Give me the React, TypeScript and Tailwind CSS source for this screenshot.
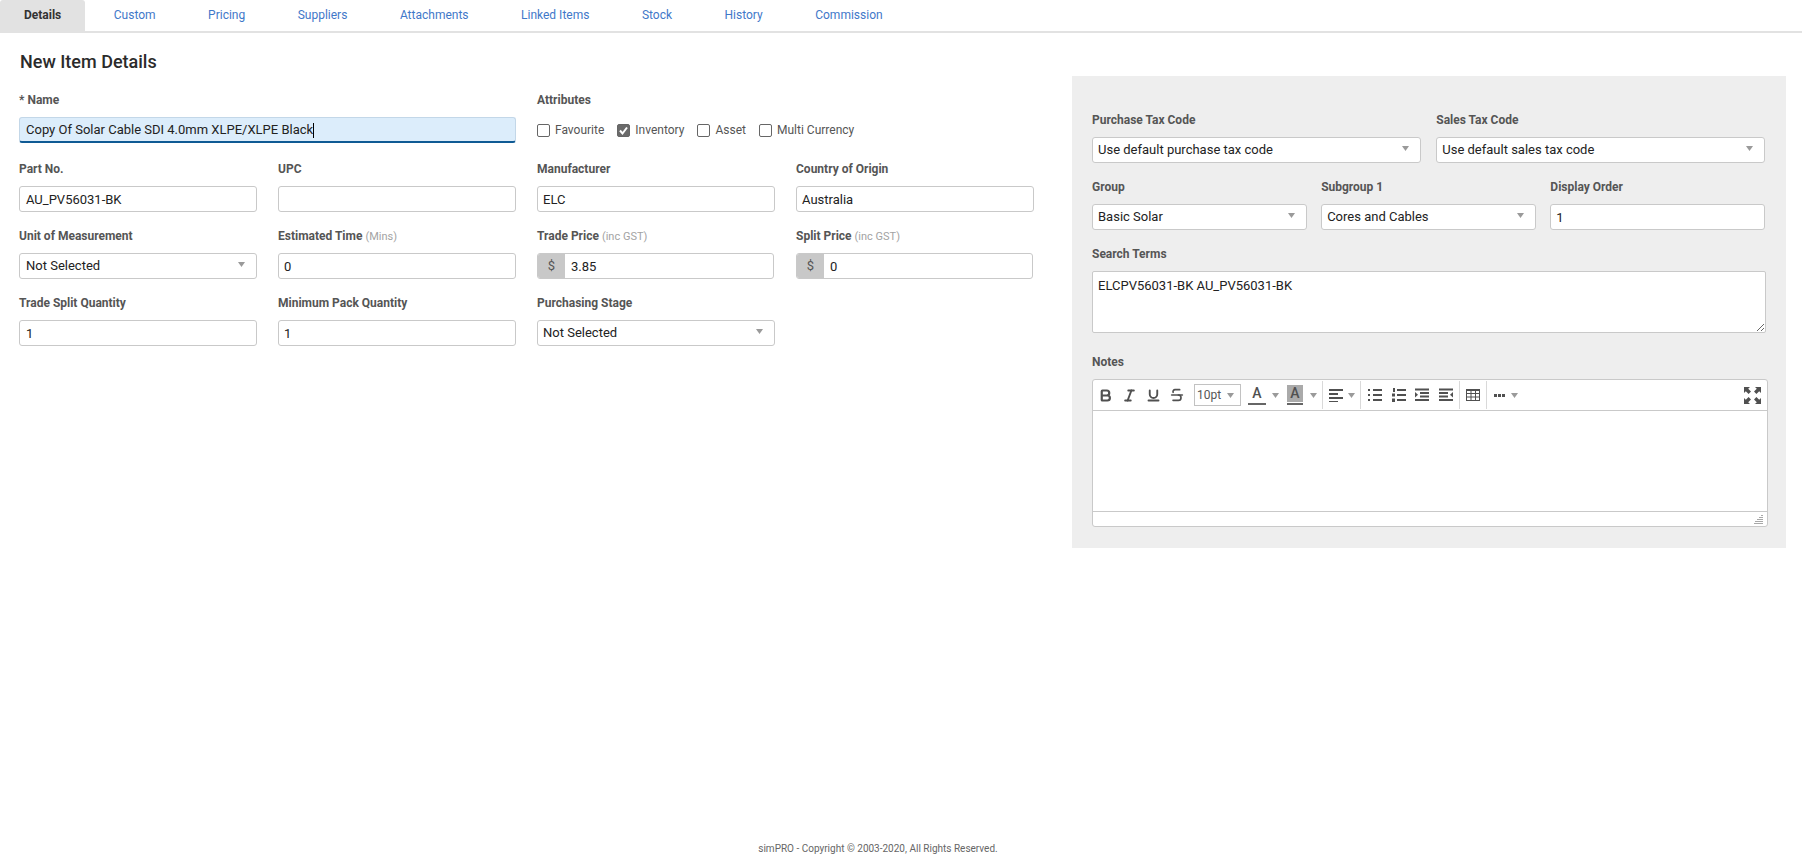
import { ReactNode } from "react";
import { Bold, Italic, Underline, Strikethrough } from "lucide-react";

const tabs = ["Custom", "Pricing", "Suppliers", "Attachments", "Linked Items", "Stock", "History", "Commission"];

const Label = ({ children, hint }: { children: ReactNode; hint?: string }) => (
  <div className="h-[16px] mb-[9px] text-[12px] leading-[16px] font-bold text-[#555] whitespace-nowrap">
    {children}
    {hint && <span className="ml-[3px] font-normal text-[11px] text-[#a3a3a3]">{hint}</span>}
  </div>
);

const Box = ({ children, className = "bg-white border-[#c9c9c9] px-[5px]" }: { children?: ReactNode; className?: string }) => (
  <div className={`h-[26px] flex items-center border rounded-[3px] text-[13px] text-[#222] whitespace-nowrap ${className}`}>
    {children}
  </div>
);

// plain text inputs sit a pixel lower than the selects
const Input = ({ value, first }: { value?: string; first?: boolean }) => (
  <Box className={`bg-white border-[#c9c9c9] pt-[2px] pr-[5px] ${first ? "pl-[6px]" : "pl-[5px]"}`}>{value}</Box>
);

const Caret = ({ className = "" }: { className?: string }) => (
  <svg width="7" height="5" viewBox="0 0 7 5" className={`shrink-0 ${className}`}>
    <path d="M0 0h7L3.5 5z" fill="#9a9a9a" />
  </svg>
);

const Select = ({ value, first }: { value: string; first?: boolean }) => (
  <Box className={`bg-white border-[#c9c9c9] justify-between pr-[11px] ${first ? "pl-[6px]" : "pl-[5px]"}`}>
    <span>{value}</span>
    <Caret className="-mt-[3px]" />
  </Box>
);

const Money = ({ value }: { value: string }) => (
  <div className="h-[26px] w-[237px] flex bg-white border border-[#c9c9c9] rounded-[3px] overflow-hidden text-[13px] text-[#222]">
    <div className="w-[27px] bg-[#c8c8c8] text-[#555] flex items-center justify-center pb-[1px]">$</div>
    <div className="flex items-center pl-[6px] pt-[2px]">{value}</div>
  </div>
);

const Check = ({ label, checked }: { label: string; checked?: boolean }) => (
  <div className="flex items-center text-[12px] text-[#555]">
    <div className={`w-[13px] h-[13px] rounded-[2px] border border-[#666] flex items-center justify-center ${checked ? "bg-[#6a6a6a]" : "bg-white"}`}>
      {checked && (
        <svg width="11" height="11" viewBox="0 0 11 11">
          <path d="M2 5.5l2.5 3L9 2.5" fill="none" stroke="#fff" strokeWidth="2" />
        </svg>
      )}
    </div>
    <span className="ml-[5px]">{label}</span>
  </div>
);

const Sep = ({ className = "" }: { className?: string }) => <div className={`w-px h-[28px] bg-[#d9d9d9] ${className}`} />;

const ToolBtn = ({ children }: { children: ReactNode }) => (
  <div className="w-[24px] flex justify-center text-[#505050]">{children}</div>
);

const Lines = ({ kind }: { kind: "left" | "bullet" | "number" | "indent" | "outdent" }) => (
  <svg width="14" height="14" viewBox="0 0 14 14" fill="#505050">
    {kind === "left" && (
      <>
        <rect y="1" width="14" height="2" />
        <rect y="5" width="9" height="2" />
        <rect y="9" width="14" height="2" />
        <rect y="13" width="9" height="1" />
      </>
    )}
    {(kind === "bullet" || kind === "number") && (
      <>
        <rect x="5" y="1" width="9" height="2" />
        <rect x="5" y="6" width="9" height="2" />
        <rect x="5" y="11" width="9" height="2" />
        {kind === "bullet" ? (
          <>
            <rect x="0" y="1" width="2" height="2" />
            <rect x="0" y="6" width="2" height="2" />
            <rect x="0" y="11" width="2" height="2" />
          </>
        ) : (
          <>
            <rect x="1" y="0" width="2" height="4" />
            <rect x="0" y="5.5" width="3" height="3" />
            <rect x="0" y="10.5" width="3" height="3.5" />
          </>
        )}
      </>
    )}
    {kind === "indent" && (
      <>
        <rect y="0.5" width="14" height="2" />
        <rect x="5" y="4" width="9" height="2" />
        <rect x="5" y="7.5" width="9" height="2" />
        <rect y="11" width="14" height="2" />
        <path d="M0 4l3 2.7-3 2.7z" />
      </>
    )}
    {kind === "outdent" && (
      <>
        <rect y="0.5" width="14" height="2" />
        <rect y="4" width="9" height="2" />
        <rect y="7.5" width="9" height="2" />
        <rect y="11" width="14" height="2" />
        <path d="M14 4l-3 2.7 3 2.7z" />
      </>
    )}
  </svg>
);

const Toolbar = () => (
  <div className="h-[31px] flex items-center border-b border-[#c9c9c9]">
    <ToolBtn><Bold size={15} strokeWidth={3.5} /></ToolBtn>
    <ToolBtn><Italic size={15} strokeWidth={3} /></ToolBtn>
    <ToolBtn><Underline size={15} strokeWidth={3} /></ToolBtn>
    <ToolBtn><Strikethrough size={16} strokeWidth={2.5} /></ToolBtn>
    <div className="ml-[5px] w-[47px] h-[22px] border border-[#c2c2c2] flex items-center justify-between pl-[2px] pr-[6px] text-[12px] text-[#555]">
      <span>10pt</span>
      <Caret />
    </div>
    <div className="ml-[7px] w-[18px] h-[20px] flex flex-col items-center justify-between text-[#505050]">
      <span className="text-[14px] leading-[16px] font-medium">A</span>
      <div className="w-full h-[2px] bg-[#666]" />
    </div>
    <Caret className="ml-[6px]" />
    <div className="ml-[8px] w-[16px] h-[21px] flex flex-col items-center text-[#505050]">
      <span className="w-full h-[17px] bg-[#aaa] text-center text-[14px] leading-[17px] font-medium">A</span>
      <div className="w-full h-[2px] mt-[1px] bg-[#666]" />
    </div>
    <Caret className="ml-[7px]" />
    <Sep className="ml-[5px]" />
    <div className="ml-[6px]"><Lines kind="left" /></div>
    <Caret className="ml-[5px]" />
    <Sep className="ml-[5px]" />
    <div className="ml-[7px]"><Lines kind="bullet" /></div>
    <div className="ml-[10px]"><Lines kind="number" /></div>
    <div className="ml-[9px]"><Lines kind="indent" /></div>
    <div className="ml-[10px]"><Lines kind="outdent" /></div>
    <Sep className="ml-[6px]" />
    <svg width="14" height="12" viewBox="0 0 14 12" className="ml-[6px]" fill="none" stroke="#505050">
      <rect x="0.5" y="0.5" width="13" height="11" />
      <path d="M0 4.5h14M0 8h14M5 1v11M9.5 1v11" />
      <rect x="0" y="0" width="14" height="2" fill="#505050" stroke="none" />
    </svg>
    <Sep className="ml-[6px]" />
    <svg width="11" height="3" viewBox="0 0 11 3" className="ml-[7px]" fill="#505050">
      <rect width="3" height="3" />
      <rect x="4" width="3" height="3" />
      <rect x="8" width="3" height="3" />
    </svg>
    <Caret className="ml-[6px]" />
    <svg width="17" height="17" viewBox="0 0 17 17" className="ml-auto mr-[6px]" fill="#505050">
      <path d="M0 0h6L4.2 1.8 7 4.6 4.6 7 1.8 4.2 0 6z" />
      <path d="M17 0v6l-1.8-1.8L12.4 7 10 4.6l2.8-2.8L11 0z" />
      <path d="M0 17v-6l1.8 1.8L4.6 10 7 12.4l-2.8 2.8L6 17z" />
      <path d="M17 17h-6l1.8-1.8L10 12.4l2.4-2.4 2.8 2.8L17 11z" />
    </svg>
  </div>
);

export default function App() {
  return (
    <div className="h-[854px] overflow-hidden bg-white flex flex-col font-['Roboto',sans-serif]">
      {/* Tabs */}
      <div className="h-[33px] shrink-0 flex gap-[4.5px] border-b-2 border-[#e2e2e2] text-[12px]">
        <div className="px-[24px] pb-[1px] h-[31px] flex items-center font-bold bg-[#e2e2e2] text-[#333] rounded-t-[3px]">Details</div>
        {tabs.map((tab) => (
          <div key={tab} className="px-[24px] pb-[1px] h-[31px] flex items-center text-[#3f78c9]">
            {tab}
          </div>
        ))}
      </div>

      <div className="flex flex-1 min-h-0">
        {/* Left form */}
        <div className="w-[1072px] shrink-0 pl-[19px]">
          <h2 className="mt-[17px] mb-[18px] ml-[1px] text-[18px] leading-[24px] font-medium text-[#2b2b2b]">New Item Details</h2>

          <div className="flex mb-[18px]">
            <div className="w-[497px]">
              <Label>* Name</Label>
              <Box className="bg-[#dcedfb] border-[#c3d7e8] border-b-2 border-b-[#0f5a94] pt-[1px] px-[6px]">
                Copy Of Solar Cable SDI 4.0mm XLPE/XLPE Black
                <span className="w-px h-[15px] bg-black" />
              </Box>
            </div>
            <div className="ml-[21px]">
              <Label>Attributes</Label>
              <div className="h-[26px] flex items-center gap-[13px]">
                <Check label="Favourite" />
                <Check label="Inventory" checked />
                <Check label="Asset" />
                <Check label="Multi Currency" />
              </div>
            </div>
          </div>

          <div className="w-[1015px] grid grid-cols-4 gap-x-[21px] gap-y-[16px]">
            <div>
              <Label>Part No.</Label>
              <Input value="AU_PV56031-BK" first />
            </div>
            <div>
              <Label>UPC</Label>
              <Input />
            </div>
            <div>
              <Label>Manufacturer</Label>
              <Input value="ELC" />
            </div>
            <div>
              <Label>Country of Origin</Label>
              <Input value="Australia" />
            </div>
            <div>
              <Label>Unit of Measurement</Label>
              <Select value="Not Selected" first />
            </div>
            <div>
              <Label hint="(Mins)">Estimated Time</Label>
              <Input value="0" />
            </div>
            <div>
              <Label hint="(inc GST)">Trade Price</Label>
              <Money value="3.85" />
            </div>
            <div>
              <Label hint="(inc GST)">Split Price</Label>
              <Money value="0" />
            </div>
            <div>
              <Label>Trade Split Quantity</Label>
              <Input value="1" first />
            </div>
            <div>
              <Label>Minimum Pack Quantity</Label>
              <Input value="1" />
            </div>
            <div>
              <Label>Purchasing Stage</Label>
              <Select value="Not Selected" />
            </div>
          </div>
        </div>

        {/* Right panel */}
        <div className="w-[714px] h-[472px] shrink-0 mt-[43px] bg-[#eeeeee] pt-[36px] pl-[20px] pr-[21px]">
          <div className="grid grid-cols-2 gap-x-[15.5px] mb-[16px]">
            <div>
              <Label>Purchase Tax Code</Label>
              <Select value="Use default purchase tax code" />
            </div>
            <div>
              <Label>Sales Tax Code</Label>
              <Select value="Use default sales tax code" />
            </div>
          </div>
          <div className="grid grid-cols-3 gap-x-[14.5px] mb-[16px]">
            <div>
              <Label>Group</Label>
              <Select value="Basic Solar" />
            </div>
            <div>
              <Label>Subgroup 1</Label>
              <Select value="Cores and Cables" />
            </div>
            <div>
              <Label>Display Order</Label>
              <Input value="1" />
            </div>
          </div>
          <Label>Search Terms</Label>
          <div className="h-[62px] -mr-[1px] mb-[21px] px-[5px] pt-[4px] bg-white border border-[#c9c9c9] rounded-[2px] text-[13px] text-[#222] resize-y overflow-auto">
            ELCPV56031-BK AU_PV56031-BK
          </div>
          <Label>Notes</Label>
          <div className="-mr-[3px] h-[148px] bg-white border border-[#c9c9c9] rounded-[3px] flex flex-col">
            <Toolbar />
            <div className="h-[101px] border-b border-[#c9c9c9]" />
            <div className="flex-1 flex justify-end items-end pr-[3px] pb-[2px]">
              <svg width="10" height="10" viewBox="0 0 10 10" stroke="#a8a8a8">
                <path d="M7 1.5h2M5 3.5h4M3 5.5h6M1 7.5h8M0 9.5h9" />
              </svg>
            </div>
          </div>
        </div>
      </div>

      {/* Footer */}
      <div className="h-[11px] shrink-0 pr-[46px] text-center text-[10px] leading-[11px] text-[#666]">
        simPRO - Copyright © 2003-2020, All Rights Reserved.
      </div>
    </div>
  );
}
